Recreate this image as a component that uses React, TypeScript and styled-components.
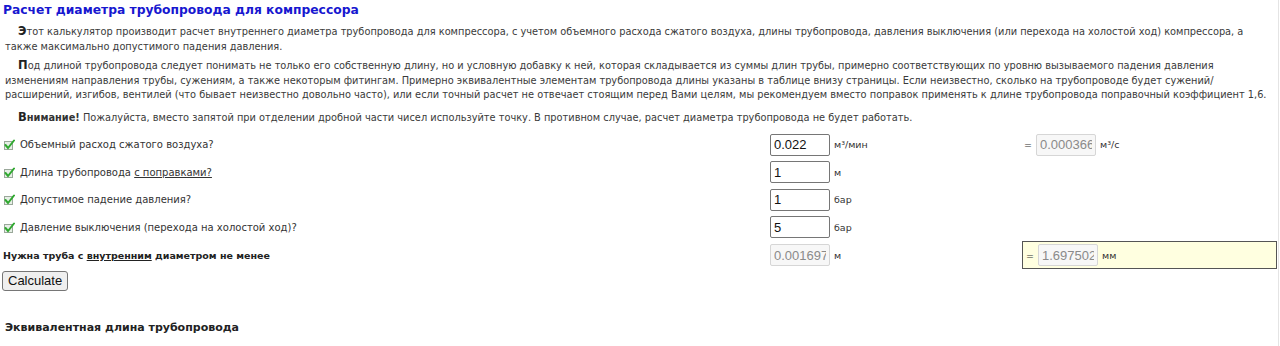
import React from 'react';
import styled, { createGlobalStyle } from 'styled-components';

const GlobalStyle = createGlobalStyle`
  html, body {
    margin: 0;
    padding: 0;
    background: #fff;
  }
  body {
    font-family: "DejaVu Sans", Verdana, sans-serif;
    font-size: 9.8px;
    color: #333;
  }
`;

const rows = [
  { label: 'Объемный расход сжатого воздуха?', value: '0.022', unit: 'м³/мин', extra: { value: '0.0003666', unit: 'м³/с' } },
  { label: 'Длина трубопровода ', link: 'с поправками?', value: '1', unit: 'м' },
  { label: 'Допустимое падение давления?', value: '1', unit: 'бар' },
  { label: 'Давление выключения (перехода на холостой ход)?', value: '5', unit: 'бар' },
];

function Check() {
  return (
    <CheckIcon viewBox="0 0 11 11" width="11" height="11">
      <rect x="0.5" y="2.5" width="8" height="8" fill="#e6efe6" stroke="#9aa89a" />
      <path d="M1.5 6 L4 9 L10 1.5" fill="none" stroke="#2fa82f" strokeWidth="2" strokeLinecap="round" />
    </CheckIcon>
  );
}

export default function App() {
  return (
    <Page>
      <GlobalStyle />
      <Title>Расчет диаметра трубопровода для компрессора</Title>
      <Paragraph $gap={6}>
        <Initial>Э</Initial>тот калькулятор производит расчет внутреннего диаметра трубопровода для компрессора, с учетом
        объемного расхода сжатого воздуха, длины трубопровода, давления выключения (или перехода на холостой ход)
        компрессора, а также максимально допустимого падения давления.
      </Paragraph>
      <Paragraph $gap={5}>
        <Initial>П</Initial>од длиной трубопровода следует понимать не только его собственную длину, но и условную добавку
        к ней, которая складывается из суммы длин трубы, примерно соответствующих по уровню вызываемого падения давления
        изменениям направления трубы, сужениям, а также некоторым фитингам. Примерно эквивалентные элементам
        трубопровода длины указаны в таблице внизу страницы. Если неизвестно, сколько на трубопроводе будет сужений/
        расширений, изгибов, вентилей (что бывает неизвестно довольно часто), или если точный расчет не отвечает
        стоящим перед Вами целям, мы рекомендуем вместо поправок применять к длине трубопровода поправочный
        коэффициент 1,6.
      </Paragraph>
      <Paragraph $gap={8}>
        <Initial>В</Initial>
        <Strong>нимание!</Strong> Пожалуйста, вместо запятой при отделении дробной части чисел используйте точку. В
        противном случае, расчет диаметра трубопровода не будет работать.
      </Paragraph>

      <Form>
        {rows.map((r, i) => (
          <Row key={i}>
            <Label>
              <Check />
              {r.label}
              {r.link && <Underlined>{r.link}</Underlined>}
            </Label>
            <Cell>
              <Input defaultValue={r.value} />
              <Unit>{r.unit}</Unit>
            </Cell>
            <Cell>
              {r.extra && (
                <>
                  <Eq>=</Eq>
                  <Input disabled value={r.extra.value} readOnly />
                  <Unit>{r.extra.unit}</Unit>
                </>
              )}
            </Cell>
          </Row>
        ))}
        <Row>
          <Label $bold>
            Нужна труба с <Underlined>внутренним</Underlined> диаметром не менее
          </Label>
          <Cell>
            <Input disabled value="0.0016975" readOnly />
            <Unit>м</Unit>
          </Cell>
          <ResultCell>
            <Eq>=</Eq>
            <Input disabled value="1.6975025" readOnly />
            <Unit>мм</Unit>
          </ResultCell>
        </Row>
      </Form>
      <Button>Calculate</Button>
      <SubTitle>Эквивалентная длина трубопровода</SubTitle>
    </Page>
  );
}

const Page = styled.div`
  width: 1279px;
  height: 346px;
  overflow: hidden;
  border-right: 1px solid #e4e4e4;
  box-sizing: border-box;
`;

const Title = styled.h2`
  margin: 0;
  padding: 2px 3px 0;
  font-size: 12.3px;
  font-weight: bold;
  color: #1717d0;
  line-height: 17px;
`;

const Paragraph = styled.p<{ $gap?: number }>`
  margin: ${({ $gap }) => $gap ?? 4}px 0 0;
  padding: 0 10px 0 5px;
  text-indent: 13px;
  line-height: 14.5px;
  color: #3a3a3a;
`;

const Initial = styled.b`
  font-size: 11.5px;
  line-height: 1;
  color: #222;
`;

const Strong = styled.b`
  color: #333;
`;

const Form = styled.div`
  display: flex;
  flex-direction: column;
  margin-top: 6px;
`;

const Row = styled.div`
  display: grid;
  grid-template-columns: 768px 254px 255px;
  height: 27.5px;
  align-items: center;
`;

const Label = styled.div<{ $bold?: boolean }>`
  display: flex;
  align-items: center;
  padding-left: ${({ $bold }) => ($bold ? '3px' : '4px')};
  font-size: ${({ $bold }) => ($bold ? '9.5px' : '10px')};
  font-weight: ${({ $bold }) => ($bold ? 'bold' : 'normal')};
  color: ${({ $bold }) => ($bold ? '#222' : '#333')};
  white-space: pre;
`;

const CheckIcon = styled.svg`
  margin-right: 5px;
  flex: none;
`;

const Underlined = styled.span`
  text-decoration: underline;
`;

const Cell = styled.div`
  display: flex;
  align-items: center;
  padding-left: 2px;
`;

const ResultCell = styled(Cell)`
  background: #ffffe0;
  border: 1px solid #555;
  height: 28px;
  box-sizing: border-box;
  padding-left: 3px;
`;

const Input = styled.input`
  width: 60px;
  height: 22px;
  box-sizing: border-box;
  padding: 1px 3px;
  font-family: "Liberation Sans", Arial, sans-serif;
  font-size: 13px;
  color: #111;
  border: 1px solid #767676;
  border-radius: 2px;
  background: #fff;

  &:disabled {
    color: #8a8a8a;
    background: #f7f7f7;
    border-color: #d6d6d6;
  }
`;

const Unit = styled.span`
  margin-left: 4px;
  font-size: 9.5px;
  color: #333;
`;

const Eq = styled.span`
  margin-right: 4px;
  font-size: 9.5px;
`;

const Button = styled.button`
  display: block;
  margin: 2px 0 0 2px;
  height: 20px;
  padding: 0 5px;
  font-family: "Liberation Sans", Arial, sans-serif;
  font-size: 13px;
  color: #111;
  background: #efefef;
  border: 1px solid #767676;
  border-radius: 3px;
`;

const SubTitle = styled.h3`
  margin: 30px 0 0;
  padding-left: 5px;
  font-size: 11px;
  line-height: 14px;
  font-weight: bold;
  color: #222;
`;
